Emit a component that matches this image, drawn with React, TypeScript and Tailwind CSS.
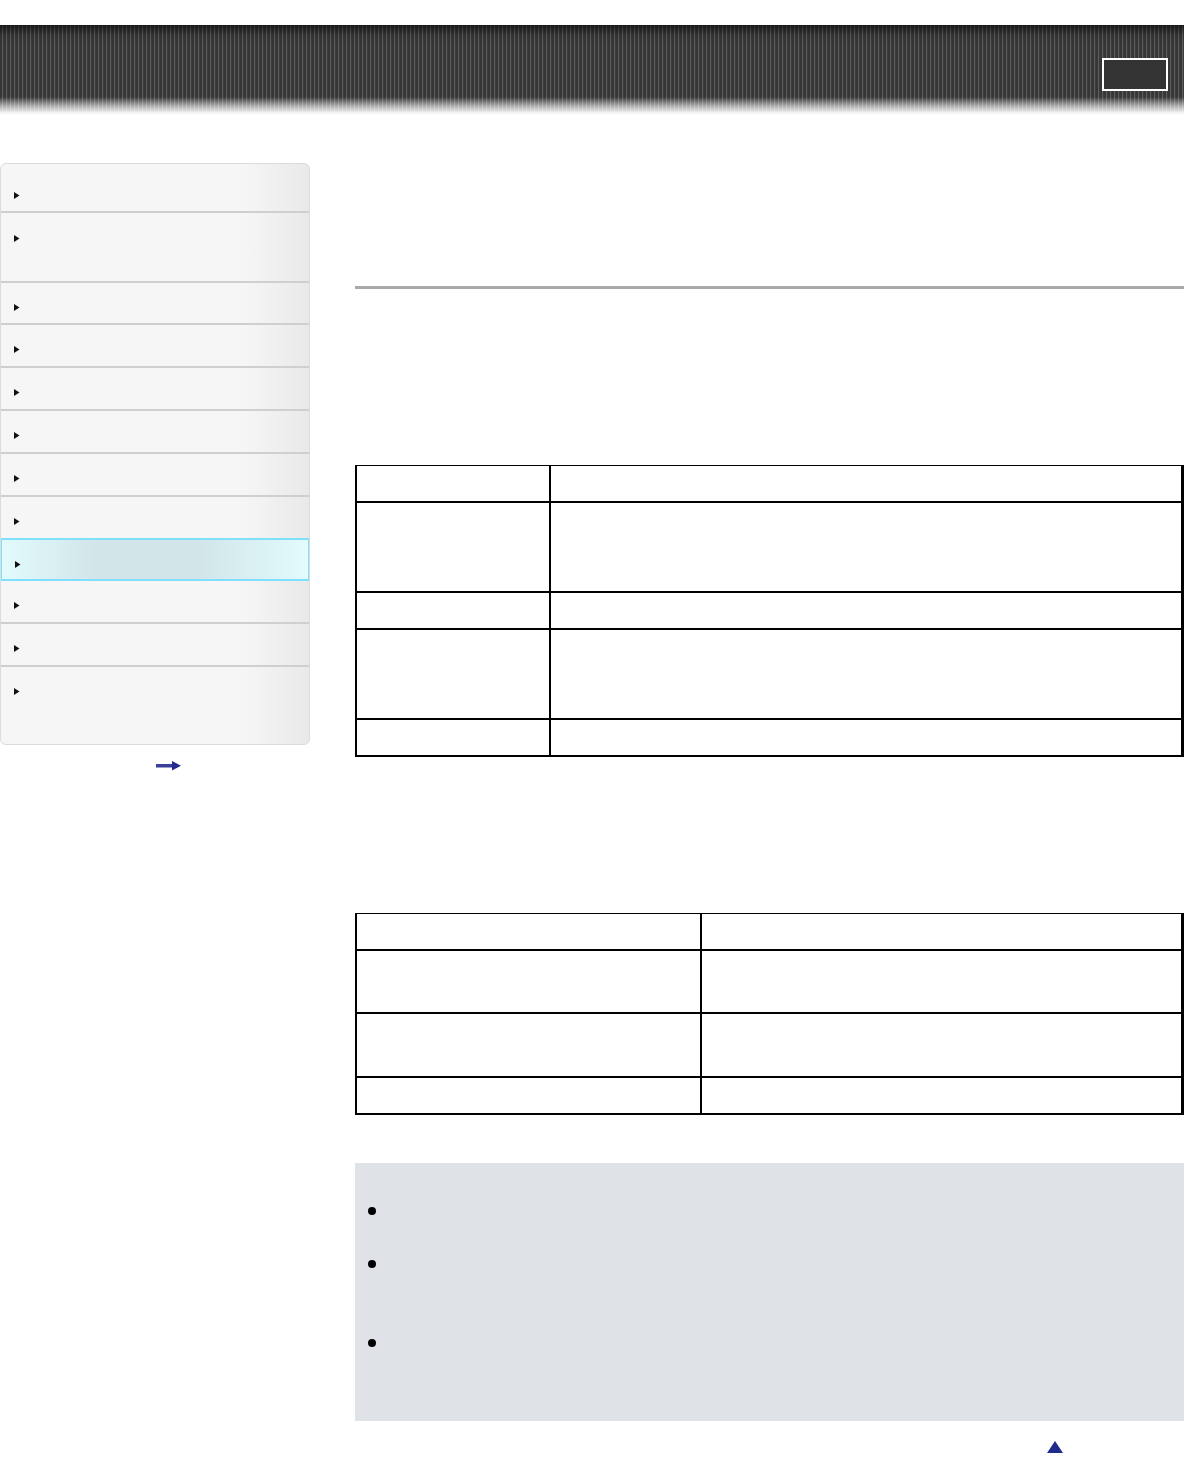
const navRows = [
  { h: 'h-[49px]', pt: 'pt-[28px]' },
  { h: 'h-[70px]', pt: 'pt-[22px]' },
  { h: 'h-[42px]', pt: 'pt-[21px]' },
  { h: 'h-[43px]', pt: 'pt-[21px]' },
  { h: 'h-[43px]', pt: 'pt-[21px]' },
  { h: 'h-[43px]', pt: 'pt-[21px]' },
  { h: 'h-[43px]', pt: 'pt-[21px]' },
  { h: 'h-[43px]', pt: 'pt-[21px]' },
  { h: 'h-[43px]', pt: 'pt-[21px]', active: true },
  { h: 'h-[43px]', pt: 'pt-[21px]' },
  { h: 'h-[43px]', pt: 'pt-[21px]' },
  { h: 'h-[77px]', pt: 'pt-[21px]', last: true },
]

function Tri() {
  return (
    <svg width="6" height="7" viewBox="0 0 6 7" className="ml-[13px] block">
      <path d="M0 0 L5.5 3.5 L0 7 Z" fill="#111" />
    </svg>
  )
}

function Sidebar() {
  return (
    <aside className="w-[310px] shrink-0">
      <div className="overflow-hidden rounded-[6px] border border-[#dcdcdc] bg-[linear-gradient(90deg,#f6f6f6_0%,#f6f6f6_78%,#e9e9ea_100%)]">
        {navRows.map((r, i) =>
          r.active ? (
            <div
              key={i}
              className={`${r.h} ${r.pt} -mx-px -mt-[2px] border-2 border-[#80dffa] bg-[linear-gradient(90deg,#e2fbfd_0%,#d2e6ea_30%,#d2e6ea_65%,#e2fbfd_100%)]`}
            >
              <Tri />
            </div>
          ) : (
            <div
              key={i}
              className={`${r.h} ${r.pt} ${r.last ? '' : 'border-b-2 border-[#cfcfcf]'}`}
            >
              <Tri />
            </div>
          )
        )}
      </div>
      <div className="flex justify-center pl-[27px] pt-[16px]">
        <svg width="26" height="10" viewBox="0 0 26 10">
          <rect x="0" y="3" width="17" height="3.5" fill="#3a3f9a" />
          <path d="M16 0 L25 4.7 L16 9.5 Z" fill="#25288f" />
        </svg>
      </div>
    </aside>
  )
}

function DataTable({ col, rows }: { col: string; rows: string[] }) {
  return (
    <div className="border-l-2 border-t border-r-[3px] border-black">
      {rows.map((h, i) => (
        <div key={i} className={`flex ${h} border-b-2 border-black`}>
          <div className={`${col} shrink-0 border-r-2 border-black`} />
          <div className="flex-1" />
        </div>
      ))}
    </div>
  )
}

export default function App() {
  return (
    <div className="min-h-[1459px] bg-white font-['Liberation_Sans','Noto_Sans_CJK_JP',sans-serif] text-[13px] text-black">
      {/* header */}
      <header className="mt-[25px] flex h-[90px] items-start justify-end bg-[linear-gradient(180deg,rgba(0,0,0,0.55)_0px,rgba(0,0,0,0.1)_10px,rgba(0,0,0,0)_20px,rgba(0,0,0,0)_72px,rgba(255,255,255,0.6)_81px,rgba(255,255,255,0.95)_88px,#fff_90px),repeating-linear-gradient(90deg,#363636_0px,#363636_2px,#5e5e5e_2px,#5e5e5e_3px,#3b3b3b_3px,#3b3b3b_4px)] pr-[16px] pt-[33px]">
        <div className="h-[33px] w-[66px] border-2 border-white bg-[#333]" />
      </header>

      <div className="mt-[48px] flex gap-[45px]">
        <Sidebar />

        <main className="min-w-0 flex-1">
          <div className="h-[123px]" />
          <div className="h-[3px] bg-[#a9a9a9]" />
          <div className="h-[176px]" />

          <DataTable
            col="w-[194px]"
            rows={['h-[37px]', 'h-[90px]', 'h-[37px]', 'h-[90px]', 'h-[37px]']}
          />

          <div className="h-[156px]" />

          <DataTable
            col="w-[345px]"
            rows={['h-[37px]', 'h-[63px]', 'h-[64px]', 'h-[37px]']}
          />

          <div className="h-[48px]" />

          <section className="h-[258px] bg-[#dfe2e7] pl-[13px] pt-[44px]">
            <ul>
              <li className="h-[53px]">
                <span className="block h-[8px] w-[8px] rounded-full bg-black" />
              </li>
              <li className="h-[79px]">
                <span className="block h-[8px] w-[8px] rounded-full bg-black" />
              </li>
              <li>
                <span className="block h-[8px] w-[8px] rounded-full bg-black" />
              </li>
            </ul>
          </section>

          <div className="flex justify-end pr-[121px] pt-[20px]">
            <svg width="16" height="12" viewBox="0 0 16 12">
              <path d="M8 0 L16 12 L0 12 Z" fill="#1f2a8c" />
            </svg>
          </div>
        </main>
      </div>
    </div>
  )
}
